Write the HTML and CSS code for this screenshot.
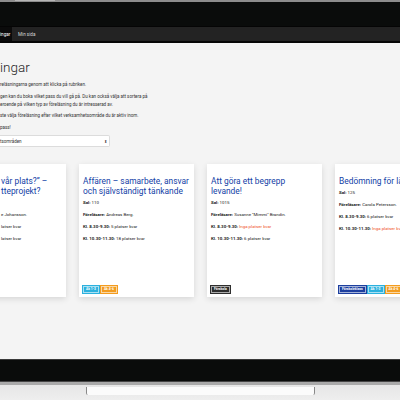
FILE: index.html
```html
<!DOCTYPE html>
<html lang="sv">
<head>
<meta charset="utf-8">
<link rel="stylesheet" href="styles.css">
</head>
<body>
<div class="device">
  <div class="bezel-top"><span class="cam"></span></div>
  <nav class="nav">
    <span class="tab tab-active">ingar</span>
    <span class="tab">Min sida</span>
  </nav>
  <main class="content">
    <h1 class="title">ingar</h1>
    <p class="txt">reläsningarna genom att klicka på rubriken.</p>
    <p class="txt">gen kan du boka vilket pass du vill gå på. Du kan också välja att sortera på<br>eroende på vilken typ av föreläsning du är intresserad av.</p>
    <p class="txt">ste välja föreläsning efter vilket verksamhetsområde du är aktiv inom.</p>
    <p class="txt">pass!</p>
    <div class="select"><span>tsområden</span><span class="arrows">⬍</span></div>

    <div class="cards">
      <article class="card card-cut">
        <h2 class="card-title">vår plats?” –<br>tteprojekt?</h2>
        <p class="info">&nbsp;</p>
        <p class="info">e Johansson.</p>
        <p class="info">latser kvar</p>
        <p class="info">latser kvar</p>
      </article>
      <article class="card">
        <h2 class="card-title">Affären – samarbete, ansvar och självständigt tänkande</h2>
        <p class="info"><b>Sal:</b> 110</p>
        <p class="info"><b>Föreläsare:</b> Andreas Berg.</p>
        <p class="info"><b>Kl. 8.30-9.30:</b> 5 platser kvar</p>
        <p class="info"><b>Kl. 10.30-11.30:</b> 18 platser kvar</p>
        <div class="badges"><span class="badge b-cyan">Åk 1-3</span><span class="badge b-orange">Åk 4-6</span></div>
      </article>
      <article class="card">
        <h2 class="card-title">Att göra ett begrepp<br>levande!</h2>
        <p class="info"><b>Sal:</b> 1015</p>
        <p class="info"><b>Föreläsare:</b> Susanne "Mimmi" Brandin.</p>
        <p class="info"><b>Kl. 8.30-9.30:</b> <span class="full">Inga platser kvar</span></p>
        <p class="info"><b>Kl. 10.30-11.30:</b> 6 platser kvar</p>
        <div class="badges"><span class="badge b-dark">Förskola</span></div>
      </article>
      <article class="card">
        <h2 class="card-title nowrap">Bedömning för lärande</h2>
        <p class="info"><b>Sal:</b> 125</p>
        <p class="info nowrap"><b>Föreläsare:</b> Carola Petersson.</p>
        <p class="info nowrap"><b>Kl. 8.30-9.30:</b> 6 platser kvar</p>
        <p class="info nowrap"><b>Kl. 10.30-11.30:</b> <span class="full">Inga platser kvar</span></p>
        <div class="badges"><span class="badge b-navy">Förskoleklass</span><span class="badge b-cyan">Åk 1-3</span><span class="badge b-orange">Åk 4-6</span></div>
      </article>
    </div>
  </main>
  <div class="bezel-bottom"></div>
  <div class="base"><span class="notch"></span></div>
</div>
</body>
</html>
```
FILE: styles.css
```css
* { box-sizing: border-box; }
html, body { margin: 0; padding: 0; }
body {
  width: 400px;
  height: 400px;
  overflow: hidden;
  font-family: Roboto, "Liberation Sans", sans-serif;
  background: #e9e9e9;
}
.device { width: 400px; height: 400px; display: flex; flex-direction: column; overflow: hidden; }
.bezel-top {
  height: 26px;
  background: #0a0c0b;
  border-top: 2px solid #8d8d8d;
  position: relative;
  flex: none;
}
.cam { position: absolute; left: 15px; top: -2px; width: 40px; height: 1px; background: #b5b5b5; }
.nav {
  height: 17px;
  flex: none;
  background: #232323;
  border-top: 1px solid #050505;
  border-bottom: 2px solid #060606;
  display: flex;
  align-items: stretch;
  font-size: 4.6px;
  color: #d8d8d8;
}
.tab { display: flex; align-items: center; padding: 0 6px; }
.tab-active { background: #0b0b0b; color: #fff; padding: 0 2px 0 0; width: 12px; }
.content {
  flex: none;
  height: 317px;
  background: #f4f4f4;
  overflow: hidden;
  padding-top: 16px;
  border-bottom: 1px solid #3a3a3a;
}
.title {
  margin: 0 0 6px;
  font-size: 13.5px;
  font-weight: 300;
  line-height: 16px;
  color: #1d1d1d;
}
.txt {
  margin: 0 0 3.6px;
  font-size: 4.5px;
  line-height: 8px;
  color: #333;
}
.select {
  width: 110px;
  height: 12px;
  margin-top: 1px;
  background: #fff;
  border: 1px solid #dcdcdc;
  border-left: none;
  border-radius: 0 2px 2px 0;
  display: flex;
  align-items: center;
  justify-content: space-between;
  font-size: 4.5px;
  color: #333;
  padding-right: 2px;
}
.arrows { font-size: 4px; }
.cards {
  display: flex;
  gap: 13px;
  margin-left: -49px;
  margin-top: 17px;
}
.card {
  flex: none;
  width: 115px;
  height: 133px;
  background: #fff;
  box-shadow: 0 2px 6px rgba(0, 0, 0, 0.12);
  padding: 12px 1px 4px 4px;
  display: flex;
  flex-direction: column;
  overflow: hidden;
}
.card-cut { padding-left: 50px; }
.card-title {
  margin: 0 0 4px;
  font-size: 8.4px;
  font-weight: 400;
  line-height: 10px;
  color: #1240a6;
}
.info {
  margin: 0 0 6.3px;
  font-size: 4.4px;
  line-height: 5.5px;
  color: #1a1a1a;
}
.info b { font-weight: 700; }
.full { color: #f0502a; }
.nowrap { white-space: nowrap; }
.badges { margin-top: auto; display: flex; gap: 2px; }
.badge {
  font-size: 3.3px;
  font-weight: 700;
  color: #fff;
  line-height: 5px;
  padding: 0 2px;
  border: 0.5px solid rgba(255,255,255,0.6);
  outline: 0.5px solid currentColor;
}
.b-cyan { background: #2cb1de; outline-color: #2cb1de; }
.b-orange { background: #f39c1f; outline-color: #f39c1f; }
.b-dark { background: #2e2e2e; outline-color: #2e2e2e; }
.b-navy { background: #1d3f9f; outline-color: #1d3f9f; }
.bezel-bottom {
  flex: none;
  height: 22px;
  background: #0a0c0b;
  border-bottom: 1px solid #444;
}
.base {
  flex: none;
  height: 18px;
  background: linear-gradient(#a9a9a9 0, #a9a9a9 3px, #e6e6e6 3px, #eeeeee 100%);
  position: relative;
}
.notch {
  position: absolute;
  left: 86px;
  top: 5px;
  width: 229px;
  height: 8px;
  background: #fbfbfb;
  border-left: 1px solid #888;
  border-right: 1px solid #888;
  border-radius: 0 0 2px 2px;
}
```
